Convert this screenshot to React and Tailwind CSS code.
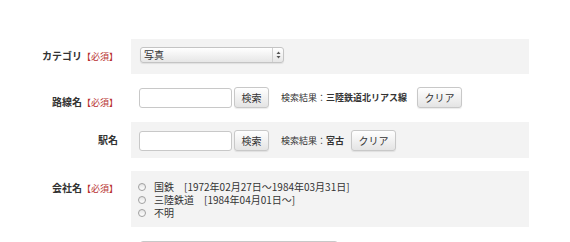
const font = { fontFamily: '"Noto Sans CJK JP", "Liberation Sans", sans-serif' };

function Label({ text, required, pad }) {
  return (
    <div className={`w-[118px] shrink-0 text-right leading-[14px] ${pad}`}>
      <span className="text-[10px] font-bold text-[#333]">{text}</span>
      {required && <span className="text-[9px] text-[#b8312f]">【必須】</span>}
    </div>
  );
}

function Btn({ children, className = '' }) {
  return (
    <button
      className={`h-[21px] rounded-[3px] border border-[#c8c8c8] bg-gradient-to-b from-white to-[#e4e4e4] text-[10px] text-[#333] shadow-[0_1px_1px_rgba(0,0,0,0.08)] ${className}`}
    >
      {children}
    </button>
  );
}

function SearchRow({ result }) {
  return (
    <div className="flex items-center">
      <input className="h-[20px] w-[93px] rounded-[3px] border border-[#c8c8c8] bg-white" />
      <Btn className="ml-[2px] w-[35px]">検索</Btn>
      <span className="ml-[12px] text-[9px] text-[#333]">
        検索結果：<span className="font-bold">{result}</span>
      </span>
    </div>
  );
}

function Radio({ children }) {
  return (
    <label className="flex h-[13px] items-center text-[10px] leading-[12px] text-[#333]">
      <span className="ml-[7px] mr-[8px] box-border h-[8px] w-[8px] shrink-0 rounded-full border border-[#a0a0a0] bg-gradient-to-b from-[#e4e4e4] to-white" />
      <span className="whitespace-nowrap">{children}</span>
    </label>
  );
}

export default function App() {
  return (
    <div className="h-[242px] w-[570px] overflow-hidden bg-white" style={font}>
      <div className="pt-[39px]">
        {/* カテゴリ */}
        <div className="flex">
          <Label text="カテゴリ" required pad="pt-[7px]" />
          <div className="ml-[13px] h-[35px] w-[398px] bg-[#f3f3f3] pl-[9px] pt-[8px]">
            <div className="flex h-[16px] w-[144px] items-center rounded-[3px] border border-[#c4c4c4] bg-gradient-to-b from-white to-[#e6e6e6] shadow-[0_1px_1px_rgba(0,0,0,0.08)]">
              <span className="flex-1 pl-[3px] text-[10px] leading-none text-[#333]">写真</span>
              <span className="flex h-full w-[11px] items-center justify-center border-l border-[#d0d0d0]">
                <svg width="5" height="8" viewBox="0 0 5 8">
                  <path d="M2.5 0.5 L4.5 3 L0.5 3 Z" fill="#555" />
                  <path d="M2.5 7.5 L4.5 5 L0.5 5 Z" fill="#555" />
                </svg>
              </span>
            </div>
          </div>
        </div>

        {/* 路線名 */}
        <div className="flex">
          <Label text="路線名" required pad="pt-[18px]" />
          <div className="ml-[13px] h-[48px] w-[398px] pl-[8px] pt-[13px]">
            <div className="flex items-center">
              <SearchRow result="三陸鉄道北リアス線" />
              <Btn className="ml-[10px] w-[45px]">クリア</Btn>
            </div>
          </div>
        </div>

        {/* 駅名 */}
        <div className="flex">
          <Label text="駅名" pad="pt-[8px]" />
          <div className="ml-[13px] h-[36px] w-[398px] bg-[#f3f3f3] pl-[8px] pt-[8px]">
            <div className="flex items-center">
              <SearchRow result="宮古" />
              <Btn className="ml-[7px] w-[45px]">クリア</Btn>
            </div>
          </div>
        </div>

        {/* 会社名 */}
        <div className="mt-[13px] flex">
          <Label text="会社名" required pad="pt-[7px]" />
          <div className="ml-[13px] h-[56px] w-[398px] bg-[#f3f3f3] pt-[9px]">
            <Radio>国鉄　[1972年02月27日〜1984年03月31日]</Radio>
            <Radio>三陸鉄道　[1984年04月01日〜]</Radio>
            <Radio>不明</Radio>
          </div>
        </div>

        <div className="flex pt-[14px]">
          <div className="w-[118px] shrink-0" />
          <div className="ml-[22px] h-[20px] w-[198px] rounded-[3px] border border-[#c8c8c8] bg-white" />
        </div>
      </div>
    </div>
  );
}
